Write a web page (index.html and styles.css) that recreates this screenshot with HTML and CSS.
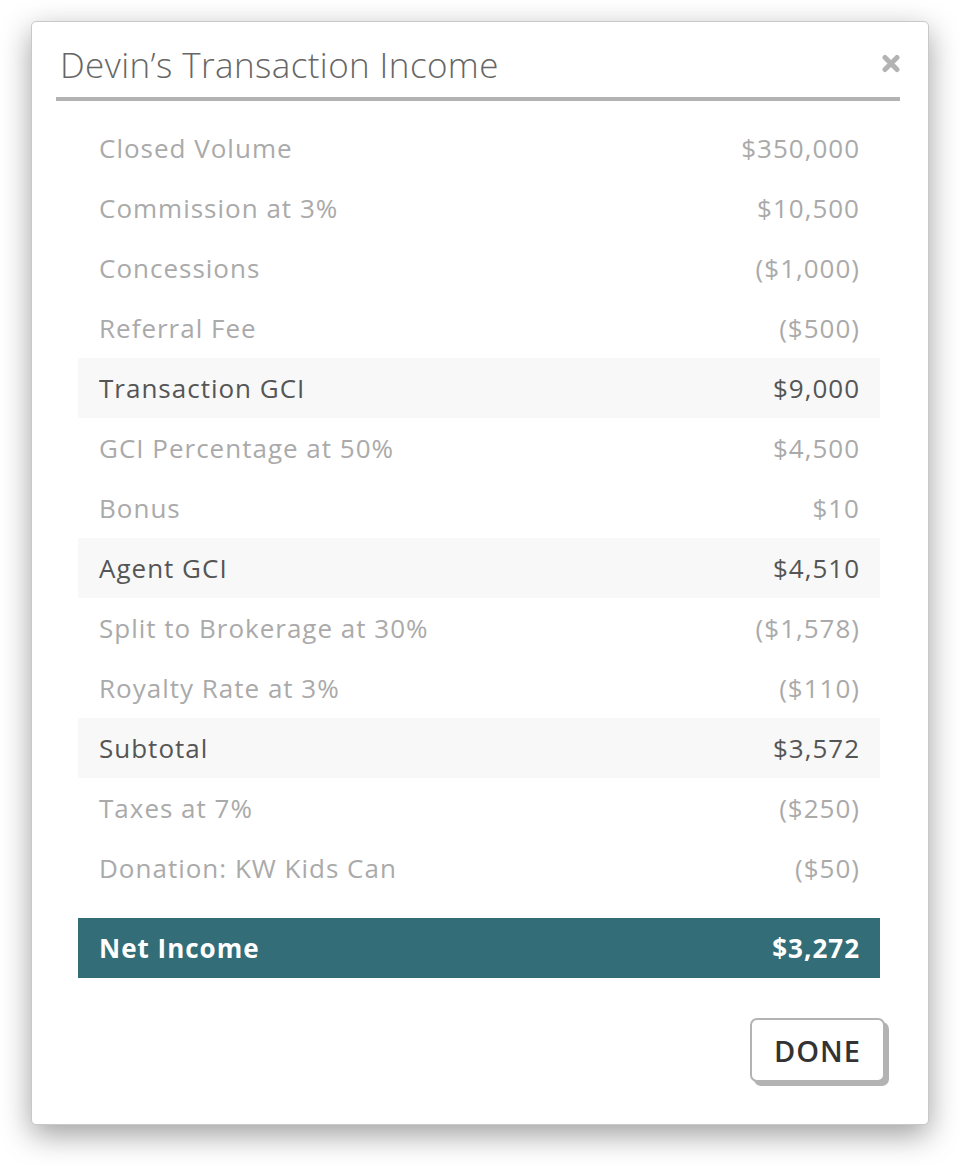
FILE: index.html
```html
<!DOCTYPE html>
<html lang="en">
<head>
    <meta charset="UTF-8">
    <title>Devin's Transaction Income</title>
    <link rel="stylesheet" href="styles.css">
</head>
<body>
    <div class="modal">
        <div class="modal-header">
            <h2>Devin’s Transaction Income</h2>
            <button class="close" aria-label="Close">
                <svg width="18" height="19" viewBox="0 0 18 19"><path d="M3 3.5 L15 15.5 M15 3.5 L3 15.5" stroke="#b3b3b3" stroke-width="5" stroke-linecap="round"/></svg>
            </button>
        </div>

        <div class="rows">
            <div class="row"><span>Closed Volume</span><span>$350,000</span></div>
            <div class="row"><span>Commission at 3%</span><span>$10,500</span></div>
            <div class="row"><span>Concessions</span><span>($1,000)</span></div>
            <div class="row"><span>Referral Fee</span><span>($500)</span></div>
            <div class="row total"><span>Transaction GCI</span><span>$9,000</span></div>
            <div class="row"><span>GCI Percentage at 50%</span><span>$4,500</span></div>
            <div class="row"><span>Bonus</span><span>$10</span></div>
            <div class="row total"><span>Agent GCI</span><span>$4,510</span></div>
            <div class="row"><span>Split to Brokerage at 30%</span><span>($1,578)</span></div>
            <div class="row"><span>Royalty Rate at 3%</span><span>($110)</span></div>
            <div class="row total"><span>Subtotal</span><span>$3,572</span></div>
            <div class="row"><span>Taxes at 7%</span><span>($250)</span></div>
            <div class="row"><span>Donation: KW Kids Can</span><span>($50)</span></div>
            <div class="row net"><span>Net Income</span><span>$3,272</span></div>
        </div>

        <div class="actions">
            <button class="done">DONE</button>
        </div>
    </div>
</body>
</html>
```

FILE: styles.css
```css
body {
    margin: 0;
    padding: 21px 31px 40px;
    font-family: 'Open Sans', sans-serif;
    background: #fff;
}
.modal {
    width: 898px;
    height: 1104px;
    box-sizing: border-box;
    background: white;
    border: 1px solid #c8c8c8;
    border-radius: 5px;
    box-shadow: 0 10px 30px rgba(0,0,0,0.38);
    padding: 0 28px 0 24px;
}
.modal-header {
    display: flex;
    justify-content: space-between;
    align-items: center;
    box-sizing: border-box;
    height: 79px;
    border-bottom: 4px solid #b3b3b3;
    padding: 10px 0 0 4px;
}
.modal-header h2 {
    margin: 0;
    font-weight: 300;
    font-size: 35px;
    color: #666;
    letter-spacing: 0.4px;
}
.close {
    background: none;
    border: none;
    padding: 0;
    margin-top: -3px;
    cursor: pointer;
    display: flex;
}
.rows {
    margin: 17px 20px 0 22px;
}
.row {
    display: flex;
    justify-content: space-between;
    align-items: center;
    height: 60px;
    padding: 0 20px 0 21px;
    font-size: 26px;
    letter-spacing: 1px;
    color: #aaa;
}
.row.total {
    background: #f8f8f8;
    color: #555;
}
.row.net {
    margin-top: 20px;
    background: #336e78;
    color: white;
    font-weight: 700;
}
.actions {
    display: flex;
    justify-content: flex-end;
    margin-top: 40px;
    padding-right: 15px;
}
.done {
    font-family: 'Open Sans', sans-serif;
    font-size: 29px;
    font-weight: 600;
    letter-spacing: 1px;
    color: #333;
    background: white;
    border: 2px solid #b3b3b3;
    border-radius: 7px;
    box-shadow: 4px 4px 0 #b3b3b3;
    width: 135px;
    height: 64px;
    padding: 0;
    cursor: pointer;
}
```
